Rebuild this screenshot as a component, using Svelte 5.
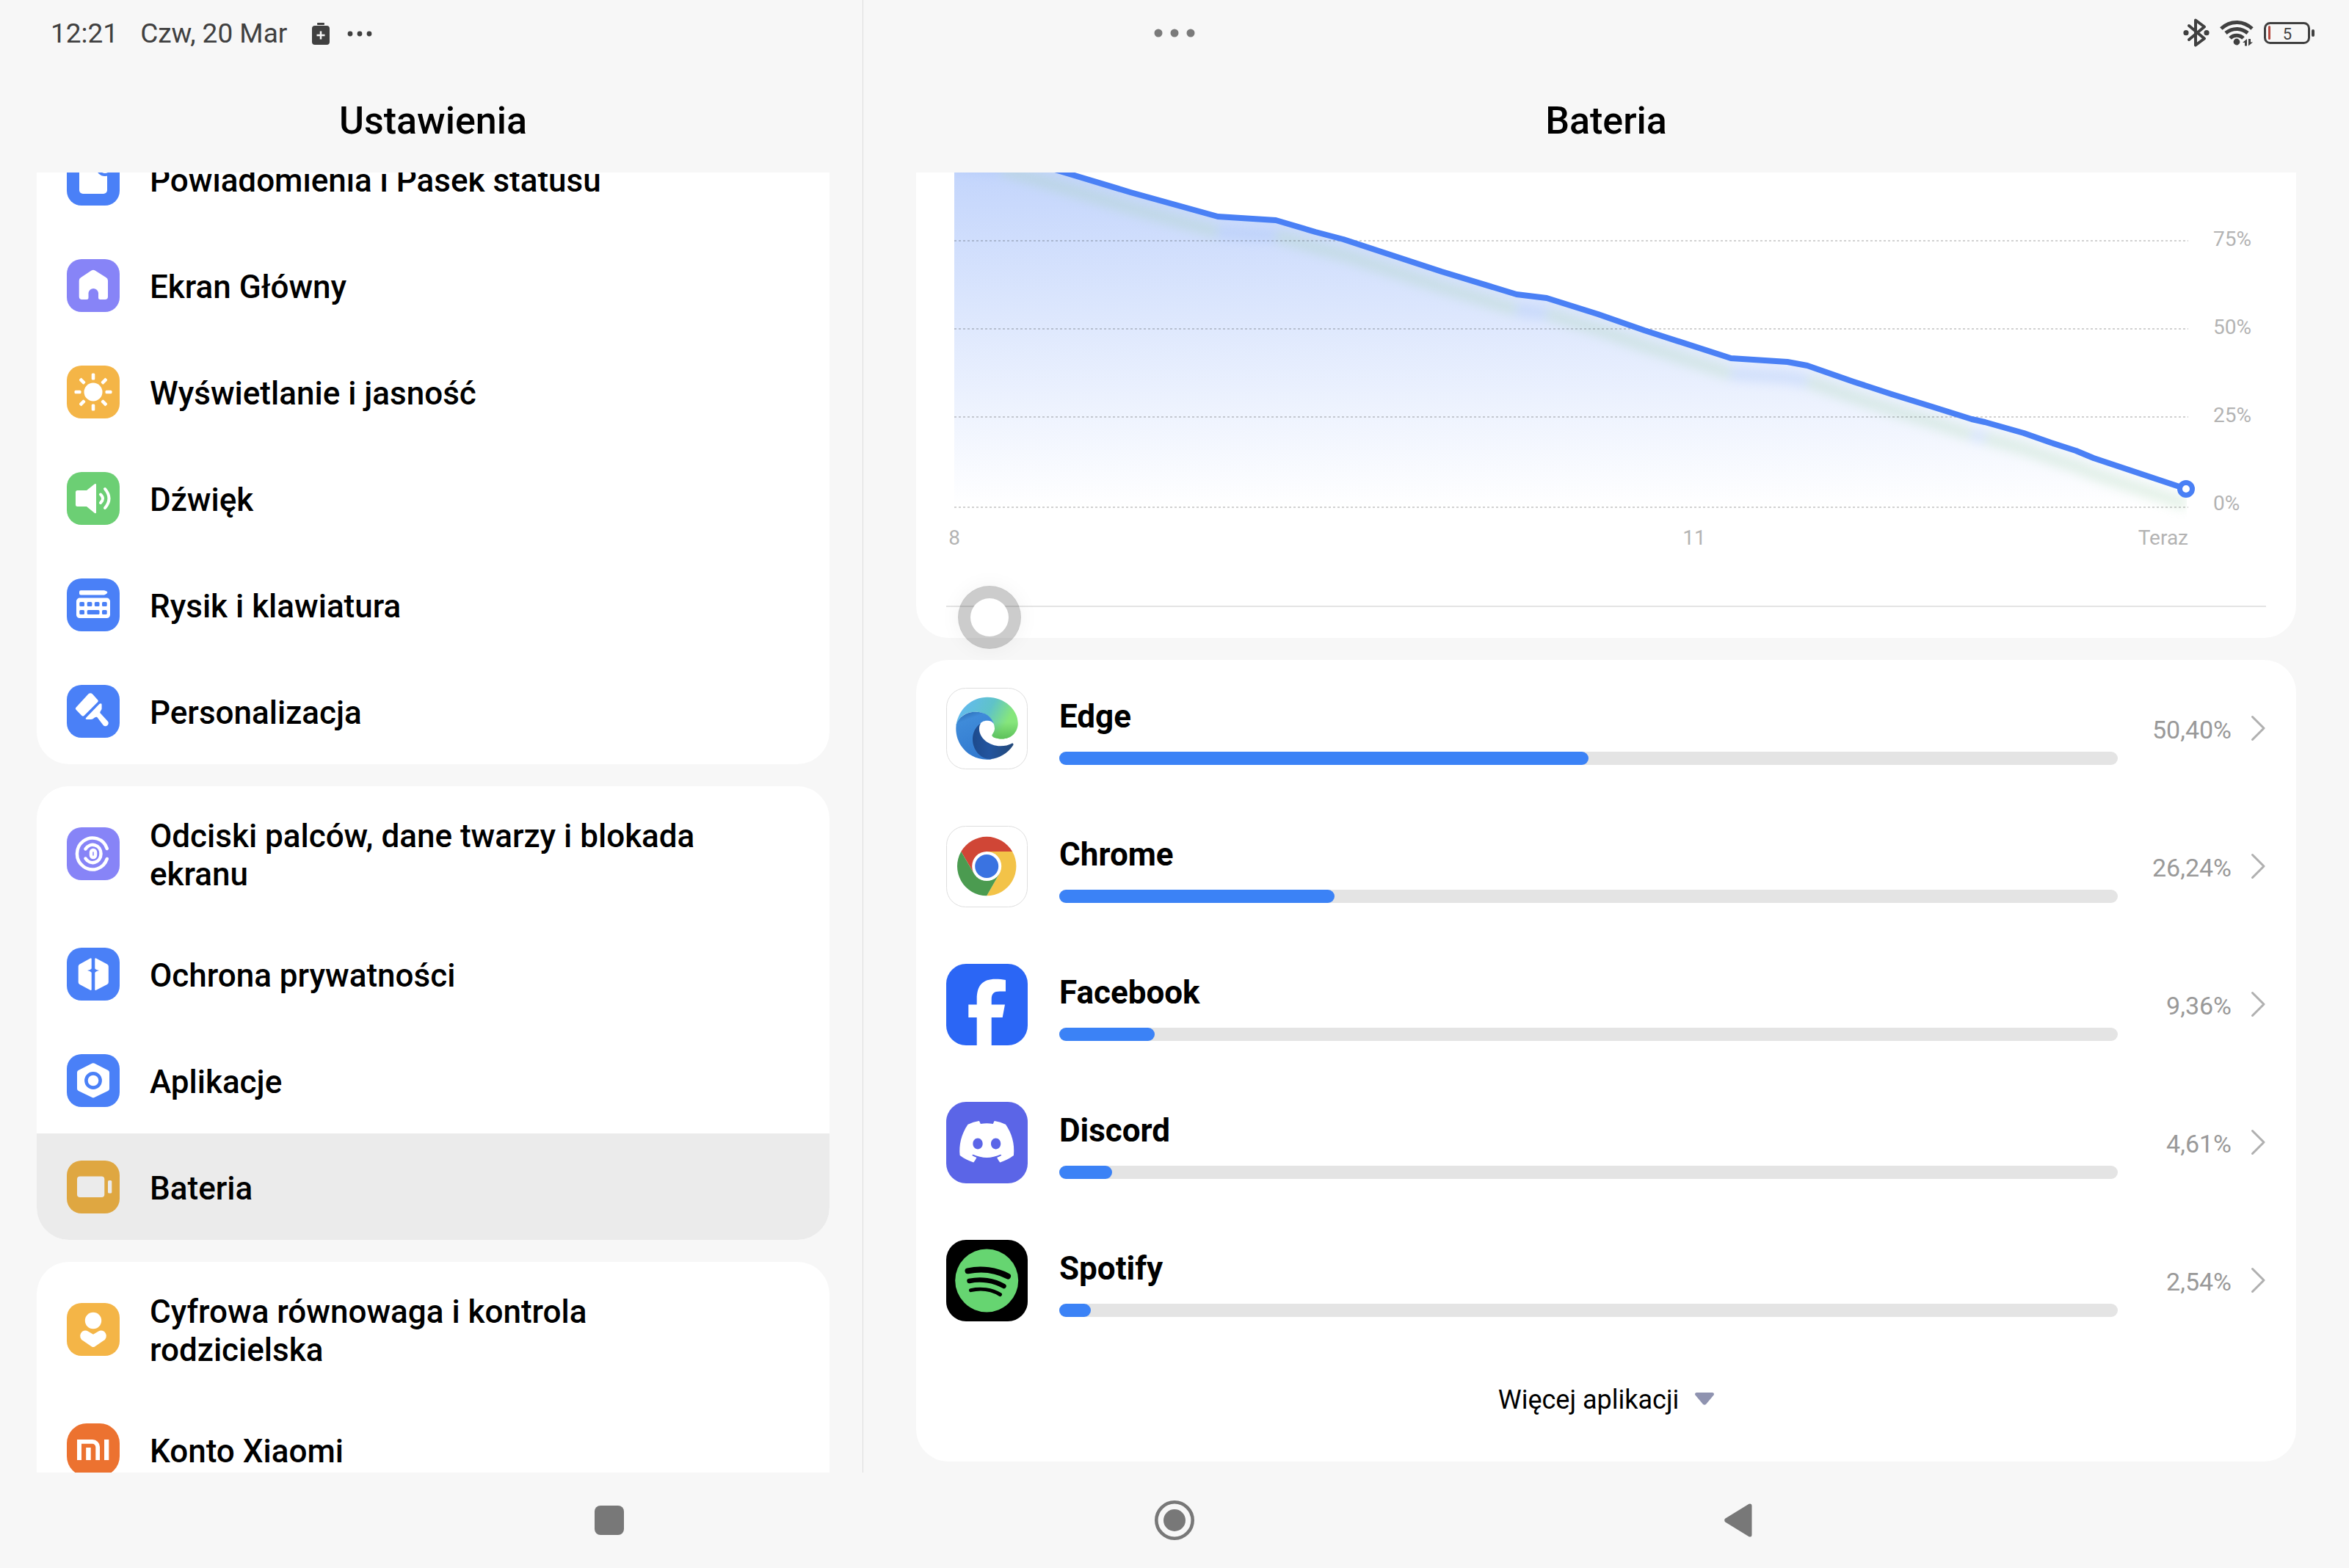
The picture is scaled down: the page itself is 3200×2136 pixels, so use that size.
<script>
    let groups = [
        [
            { icon: "notify", color: "#4a80f7", name: "Powiadomienia i Pasek statusu" },
            { icon: "home", color: "#8784f7", name: "Ekran Główny" },
            { icon: "sun", color: "#f4b547", name: "Wyświetlanie i jasność" },
            { icon: "sound", color: "#6ccf74", name: "Dźwięk" },
            { icon: "keyboard", color: "#4a80f7", name: "Rysik i klawiatura" },
            { icon: "brush", color: "#4a80f7", name: "Personalizacja" }
        ],
        [
            { icon: "finger", color: "#8784f7", name: "Odciski palców, dane twarzy i blokada ekranu" },
            { icon: "privacy", color: "#4a80f7", name: "Ochrona prywatności" },
            { icon: "apps", color: "#4a80f7", name: "Aplikacje" },
            { icon: "battery", color: "#dfa741", name: "Bateria" }
        ],
        [
            { icon: "person", color: "#f4b547", name: "Cyfrowa równowaga i kontrola rodzicielska" },
            { icon: "mi", color: "#ec7230", name: "Konto Xiaomi" }
        ]
    ];

    let selected = "Bateria";

    let usage = [
        { icon: "edge", name: "Edge", value: 50.4 },
        { icon: "chrome", name: "Chrome", value: 26.24 },
        { icon: "facebook", name: "Facebook", value: 9.36 },
        { icon: "discord", name: "Discord", value: 4.61 },
        { icon: "spotify", name: "Spotify", value: 2.54 }
    ];

    let percent = (value => value.toFixed(2).replace(".", ",") + "%");

    /* plot is 1681 wide, y = 0 is 100% */
    let points = [
        [0, -3], [64, 1], [157, 29], [240, 54], [359, 87], [438, 92], [492, 108], [530, 118],
        [664, 162], [766, 193], [807, 198], [877, 220], [940, 242], [1058, 280], [1135, 285],
        [1162, 290], [1225, 312], [1277, 329], [1332, 346], [1386, 363], [1404, 367],
        [1457, 382], [1494, 395], [1528, 406], [1552, 416], [1678, 458]
    ];
    let last = points[points.length - 1];

    let toPath = (list => "M" + list.map(p => p.join(" ")).join("L"));
    let between = ((from, to) => toPath(points.filter(p => p[0] >= from && p[0] <= to)));

    let line = toPath(points);
    let area = line + `V483H0Z`;

    /* idle stretches glow blue, active ones green */
    let idle = [[0, 64], [359, 438], [766, 807], [1058, 1162], [1386, 1404]];
    let active = [[64, 359], [438, 766], [807, 1058], [1162, 1386], [1404, 1678]];

    let grid = [
        { y: 120, label: "75%" },
        { y: 240, label: "50%" },
        { y: 360, label: "25%" },
        { y: 483, label: "0%" }
    ];
</script>

<div class="screen">
    <header class="status">
        <div class="status__left">
            <span class="clock">12:21</span>
            <span class="date">Czw, 20 Mar</span>
            <svg class="saver" width="24" height="30" viewBox="0 0 24 30">
                <rect x="7" y="0" width="10" height="3" rx="1" />
                <rect x="0" y="4" width="24" height="26" rx="4" />
                <path d="M12 11.5v11M6.5 17h11" stroke="#f7f7f7" stroke-width="2.5" />
            </svg>
            <svg width="34" height="8" viewBox="0 0 34 8">
                <circle cx="4" cy="4" r="3.4" /><circle cx="17" cy="4" r="3.4" /><circle cx="30" cy="4" r="3.4" />
            </svg>
        </div>
        <button class="handle" aria-label="Okno">
            <svg width="60" height="14" viewBox="0 0 60 14">
                <circle cx="8" cy="7" r="5.5" /><circle cx="30" cy="7" r="5.5" /><circle cx="52" cy="7" r="5.5" />
            </svg>
        </button>
        <div class="status__right">
            <svg width="36" height="40" viewBox="0 0 36 40">
                <path d="M8 10L29 27.5L17 36.5V2.5L29 11.5L8 29" fill="none" stroke="#404040" stroke-width="4" stroke-linecap="round" stroke-linejoin="round" />
                <circle cx="4" cy="19.7" r="3.6" /><circle cx="32" cy="19.7" r="3.6" />
            </svg>
            <svg width="46" height="36" viewBox="0 0 46 36">
                <g fill="none" stroke="#404040" stroke-width="5">
                    <path d="M1.8 12C14 .6 32 .6 44 12" />
                    <path d="M8 18C17 10.5 29 10.5 38 18" />
                    <path d="M14 25C19 20 27 20 32 25" />
                </g>
                <circle cx="23" cy="30" r="4.4" />
                <path d="M31 31L37 26v9.500h-3V31zM45 30.500L39 35.500V26h3v4.500z" />
            </svg>
            <svg width="69" height="30" viewBox="0 0 69 30">
                <rect x="1.5" y="1.5" width="60" height="27" rx="7" fill="none" stroke="#404040" stroke-width="3" />
                <rect x="65" y="10" width="4" height="10" rx="2" />
                <rect x="6" y="5" width="3" height="19" rx="1.5" fill="#b5483f" />
                <text class="level" x="32" y="24" text-anchor="middle">5</text>
            </svg>
        </div>
    </header>

    <section class="pane pane--menu">
        <h1 class="title">Ustawienia</h1>
        <div class="scroll">
            <nav class="stack">
                {#each groups as group}
                    <div class="card">
                        {#each group as item}
                            <button class="item" class:item--active={item.name === selected}>
                                <svg class="item__icon" viewBox="0 0 72 72" fill="#fff">
                                    <rect width="72" height="72" rx={item.icon === "mi" ? 27 : 20} fill={item.color} />
                                    {#if item.icon === "notify"}
                                        <rect x="17" y="17" width="38" height="39" rx="5" />
                                        <circle cx="52" cy="20" r="12" fill="#4a80f7" />
                                        <circle cx="52" cy="20" r="8" />
                                    {:else if item.icon === "home"}
                                        <path d="M33.5 15.5a5 5 0 0 1 5 0L53.5 25a5 5 0 0 1 2.5 4.3V51a4 4 0 0 1-4 4h-6.5a2.5 2.5 0 0 1-2.5-2.5V46a6.8 6.8 0 0 0-13.5 0v6.5a2.5 2.5 0 0 1-2.5 2.5h-6.3a4 4 0 0 1-4-4V29.3a5 5 0 0 1 2.5-4.3z" />
                                    {:else if item.icon === "sun"}
                                        <circle cx="36" cy="36" r="12.5" />
                                        {#each [0, 45, 90, 135, 180, 225, 270, 315] as angle}
                                            <rect x="33.7" y="10.5" width="4.6" height="9" rx="1.5" transform="rotate({angle} 36 36)" />
                                        {/each}
                                    {:else if item.icon === "sound"}
                                        <path d="M14.5 25H27L38 16.3q2-1 2 1V55q0 2-2 1L27 47H14.5a2.5 2.5 0 0 1-2.5-2.5v-17a2.5 2.5 0 0 1 2.5-2.5z" />
                                        <path d="M46 30.5q6 5.5 0 11.5M52 23q11 13 0 26" fill="none" stroke="#fff" stroke-width="4" stroke-linecap="round" />
                                    {:else if item.icon === "keyboard"}
                                        <path d="M19 16.2H51q3 .6 4.5 3-1.5 2.6-4.5 3.2H19a2 2 0 0 1-2-2v-2.2a2 2 0 0 1 2-2z" />
                                        <rect x="13" y="26.6" width="46" height="27.4" rx="4.5" />
                                        <g fill="#4a80f7">
                                            <rect x="17.3" y="32" width="6.7" height="6" rx="1.5" />
                                            <rect x="27.7" y="32" width="6.7" height="6" rx="1.5" />
                                            <rect x="37.8" y="32" width="6.7" height="6" rx="1.5" />
                                            <rect x="48" y="32" width="6.7" height="6" rx="1.5" />
                                            <rect x="17.3" y="43" width="6.7" height="6" rx="1.5" />
                                            <rect x="27.7" y="43" width="16.8" height="6" rx="1.5" />
                                            <rect x="48" y="43" width="6.7" height="6" rx="1.5" />
                                        </g>
                                    {:else if item.icon === "brush"}
                                        <path d="M29.5 12.3q2.8-2 5.5.2L42.2 20.5q1.3 1.5 0 2.8L23.5 42q-1.6 1.2-3 0L12.5 33.8q-1.4-1.5 0-3z" />
                                        <path d="M44.6 25.8q2.9-1.5 3 1V32c0 2.8-2.8 4-2.2 6.2L55.3 49a3.8 3.8 0 0 1-5.4 6.3L41.5 44.3c-3-2-4.5 2.5-8.5 2.7h-5.5q-3.2-.2-1-2.6z" />
                                    {:else if item.icon === "finger"}
                                        <g fill="none" stroke="#fff" stroke-width="4.5" stroke-linecap="round">
                                            <path d="M54.8 29A21 21.5 0 1 0 54.8 43" />
                                            <path d="M25.5 29.5C32 19.5 46.5 23.5 46.5 36S32 52.5 25.5 42.5" />
                                            <rect x="33" y="31" width="6" height="10" rx="3" />
                                        </g>
                                    {:else if item.icon === "privacy"}
                                        <path d="M32 14.4q1.7-.6 1.7 1.2V57q0 1.4-1.7.8L17.5 50q-1.8-1-1.8-3V25.5q0-2 1.8-3zM40 14.4q-1.7-.6-1.7 1.2V57q0 1.4 1.7.8L55 50q1.8-1 1.8-3V25.5q0-2-1.8-3z" />
                                        <path d="M36 24q1 6 8 7-7 1-8 8-1-7-8-8 7-1 8-7z" fill="#4a80f7" />
                                    {:else if item.icon === "apps"}
                                        <path d="M34.5 12.6q1.5-.8 3 0L56.2 22q1.8 1 1.8 3v22q0 2-1.8 3L37.5 59.1q-1.5.8-3 0L15.8 50Q14 49 14 47V25q0-2 1.8-3z" />
                                        <circle cx="36" cy="36" r="9.6" fill="none" stroke="#4a80f7" stroke-width="4.6" />
                                    {:else if item.icon === "battery"}
                                        <g fill="#ebebeb">
                                            <rect x="14" y="21.5" width="37.3" height="28.5" rx="4" />
                                            <rect x="56" y="27" width="5.3" height="17.5" rx="1.5" />
                                        </g>
                                    {:else if item.icon === "person"}
                                        <circle cx="36" cy="24" r="11.2" />
                                        <path d="M34 59.5L22 51.2A7.2 7.2 0 0 1 28.8 38.4L36 42.8L43.2 38.4A7.2 7.2 0 0 1 50 51.2L38 59.5q-2 1-4 0z" />
                                    {:else if item.icon === "mi"}
                                        <path d="M14 22H35a10 10 0 0 1 10 10V50H39.3V32.5a4.5 4.5 0 0 0-4.5-4.7H20V50H14z" />
                                        <rect x="26.2" y="33" width="6.5" height="17" />
                                        <rect x="51" y="22" width="6.3" height="28" />
                                    {/if}
                                </svg>
                                <span class="item__name">{item.name}</span>
                            </button>
                        {/each}
                    </div>
                {/each}
            </nav>
        </div>
    </section>

    <section class="pane pane--detail">
        <h1 class="title">Bateria</h1>
        <div class="scroll">
            <div class="stack">
                <div class="card card--chart">
                    <svg class="chart" viewBox="-52 -37 1880 600">
                        <defs>
                            <linearGradient id="fade" gradientUnits="userSpaceOnUse" x1="0" y1="0" x2="0" y2="483">
                                <stop offset="0" stop-color="#4a80f5" stop-opacity=".35" />
                                <stop offset="1" stop-color="#4a80f5" stop-opacity="0" />
                            </linearGradient>
                            <filter id="soft" filterUnits="userSpaceOnUse" x="-20" y="-60" width="1720" height="620">
                                <feGaussianBlur stdDeviation="7" />
                            </filter>
                            <clipPath id="plot"><rect x="0" y="-37" width="1679" height="560" /></clipPath>
                        </defs>
                        <path d={area} fill="url(#fade)" />
                        <g clip-path="url(#plot)">
                            <g class="glow" filter="url(#soft)" transform="translate(0 21)">
                                {#each idle as [from, to]}
                                    <path d={between(from, to)} stroke="#9cbcf5" />
                                {/each}
                                {#each active as [from, to]}
                                    <path d={between(from, to)} stroke="#a8d4b0" />
                                {/each}
                            </g>
                        </g>
                        {#each grid as row}
                            <path class="rule" d="M0 {row.y}H1681" />
                        {/each}
                        <path class="line" d={line} />
                        <circle cx={last[0]} cy={last[1]} r="8.5" fill="#fff" stroke="#4a80f5" stroke-width="7" />
                        {#each grid as row, i}
                            <text class="axis" x="1715" y={127 + i * 120}>{row.label}</text>
                        {/each}
                        <text class="axis" x="0" y="534" text-anchor="middle">8</text>
                        <text class="axis" x="1008" y="534" text-anchor="middle">11</text>
                        <text class="axis" x="1681" y="534" text-anchor="end">Teraz</text>
                    </svg>
                    <hr />
                    <button class="touch" aria-label="Menu dotykowe"></button>
                </div>

                <div class="card">
                    {#each usage as app}
                        <button class="app">
                            <svg class="app__icon" viewBox="0 0 111 111">
                                {#if app.icon === "edge"}
                                    <defs>
                                        <linearGradient id="edgeTop" x1="0" y1="0" x2="1" y2=".35">
                                            <stop offset=".2" stop-color="#62bbea" />
                                            <stop offset=".58" stop-color="#5fc3c8" />
                                            <stop offset=".92" stop-color="#86e67c" />
                                        </linearGradient>
                                        <linearGradient id="edgeLow" x1="0" y1="0" x2="0" y2="1">
                                            <stop offset=".6" stop-color="#5cc05a" stop-opacity="0" />
                                            <stop offset="1" stop-color="#5cc05a" />
                                        </linearGradient>
                                        <linearGradient id="edgeMid" x1=".2" y1="0" x2=".5" y2="1">
                                            <stop offset="0" stop-color="#2a6cb4" />
                                            <stop offset=".18" stop-color="#3f8bd9" />
                                            <stop offset="1" stop-color="#3179cf" />
                                        </linearGradient>
                                        <linearGradient id="edgeDark" x1="0" y1="0" x2="1" y2="0">
                                            <stop offset="0" stop-color="#1d4a8c" />
                                            <stop offset=".4" stop-color="#23559f" />
                                            <stop offset="1" stop-color="#234879" />
                                        </linearGradient>
                                    </defs>
                                    <rect class="edging" x=".5" y=".5" width="110" height="110" rx="26" />
                                    {#each ["edgeTop", "edgeLow"] as fill}
                                        <path d="M13.5 51C17 28 35 12.7 56 12.7C80 12.7 97.7 30 97.7 48C97.7 61 88 69.5 76 69.5C68 69.5 62 67 62.5 64.5C63 62.5 66 60 66 55.5C66 43 54 32.7 40 32.7C28 32.7 18 38 13.5 51Z" fill="url(#{fill})" />
                                    {/each}
                                    <path d="M13.6 50C17 40 27 32.7 40 32.7C53 32.7 62 39 65.3 50C63 46 60 44.8 55.5 44.8C51 44.8 47 47 46 50C41 56 39 62 39 70C39 84 46 95 62 97.2C60 97.7 58 97.7 55.5 97.7C32 97.7 13.3 79 13.3 55.5Z" fill="url(#edgeMid)" />
                                    <path d="M47 48.5C40 53 36 61 36 70C36 84 46 97 60 97.3C73 96 85 88 91.3 78C92 76 90.5 75 89 76C85 78 80 79.3 74 79.3C58 79.3 45 68 45 56C45 53 45.5 51 47 48.5Z" fill="url(#edgeDark)" />
                                {:else if app.icon === "chrome"}
                                    <rect class="edging" x=".5" y=".5" width="110" height="110" rx="26" />
                                    <path d="M20.3 35A40.3 40.3 0 0 1 90.1 35H55.2L37.9 65Z" fill="#d04636" />
                                    <path d="M90.1 35A40.3 40.3 0 0 1 55.2 95.3L72.5 65L55.2 35Z" fill="#f3c348" />
                                    <path d="M55.2 95.3A40.3 40.3 0 0 1 20.3 35L37.9 65H72.5Z" fill="#4b9b50" />
                                    <circle cx="55.2" cy="55" r="20" fill="#fff" />
                                    <circle cx="55.2" cy="55" r="16" fill="#3a73e1" />
                                {:else if app.icon === "facebook"}
                                    <rect width="111" height="111" rx="27" fill="#2b66f5" />
                                    <path d="M41.7 111V73H30.3V55.4H41.7V48C41.7 29 50 20.7 67 20.7C72 20.7 77 21 81 22V37.5H73C65 37.5 61.7 40.5 61.7 48V55.4H80L76.7 73H61.7V111Z" fill="#fff" />
                                {:else if app.icon === "discord"}
                                    <rect width="111" height="111" rx="27" fill="#5b65e7" />
                                    <path transform="translate(18.3 17.2) scale(3.083)" fill="#fff" d="M20.317 4.37a19.79 19.79 0 0 0-4.885-1.515.074.074 0 0 0-.079.037c-.211.375-.445.865-.608 1.25-1.845-.276-3.68-.276-5.487 0-.164-.393-.406-.874-.618-1.25a.077.077 0 0 0-.079-.037 19.74 19.74 0 0 0-4.885 1.515.07.07 0 0 0-.032.028C.533 9.046-.319 13.58.099 18.058a.082.082 0 0 0 .031.056c2.053 1.508 4.041 2.423 5.993 3.029a.078.078 0 0 0 .084-.028c.462-.63.873-1.295 1.226-1.994a.076.076 0 0 0-.042-.106c-.653-.248-1.274-.55-1.872-.892a.077.077 0 0 1-.008-.128c.126-.094.252-.192.372-.291a.074.074 0 0 1 .078-.011c3.928 1.793 8.18 1.793 12.061 0a.074.074 0 0 1 .079.01c.12.099.246.198.373.292a.077.077 0 0 1-.007.128 12.3 12.3 0 0 1-1.873.891.077.077 0 0 0-.041.107c.36.698.772 1.363 1.225 1.993a.076.076 0 0 0 .084.029c1.961-.607 3.95-1.522 6.002-3.029a.077.077 0 0 0 .031-.055c.5-5.177-.838-9.674-3.549-13.66a.061.061 0 0 0-.031-.029zM8.02 15.331c-1.183 0-2.157-1.086-2.157-2.419s.956-2.419 2.157-2.419c1.211 0 2.176 1.095 2.157 2.419 0 1.333-.956 2.419-2.157 2.419zm7.975 0c-1.183 0-2.157-1.086-2.157-2.419s.955-2.419 2.157-2.419c1.211 0 2.176 1.095 2.157 2.419 0 1.333-.946 2.419-2.157 2.419z" />
                                {:else}
                                    <rect width="111" height="111" rx="27" />
                                    <circle cx="55.2" cy="55.4" r="43" fill="#66d571" />
                                    <g fill="none" stroke="#000" stroke-linecap="round">
                                        <path d="M29.5 42.3C48 38.5 68 41 84 49.5" stroke-width="8" />
                                        <path d="M31.5 56C47 52.5 65 55 78.5 63" stroke-width="6.5" />
                                        <path d="M33.5 68.6C47 65.5 62 67.5 73.5 74.5" stroke-width="5" />
                                    </g>
                                {/if}
                            </svg>
                            <span class="app__body">
                                <span class="app__name">{app.name}</span>
                                <span class="bar"><span class="bar__fill" style="width: {Math.round(app.value)}%"></span></span>
                            </span>
                            <span class="app__value">{percent(app.value)}</span>
                            <svg class="app__arrow" width="20" height="36" viewBox="0 0 20 36">
                                <path d="M1.5 2.5L17 18L1.5 33.5" />
                            </svg>
                        </button>
                    {/each}
                    <button class="more">
                        Więcej aplikacji
                        <svg width="26" height="20" viewBox="0 0 26 20">
                            <path d="M2 0H24q3 1 1.5 3.500L15 16q-2 1.6-4 0L.5 3.5Q-1 1 2 0z" />
                        </svg>
                    </button>
                </div>
            </div>
        </div>
    </section>

    <footer class="keys">
        <button class="key" aria-label="Ostatnie">
            <svg width="40" height="40" viewBox="0 0 40 40"><rect width="40" height="40" rx="8" /></svg>
        </button>
        <button class="key" aria-label="Ekran główny">
            <svg width="54" height="54" viewBox="0 0 54 54">
                <circle cx="27" cy="27" r="24.7" fill="none" stroke="#787878" stroke-width="4.6" />
                <circle cx="27" cy="27" r="15" />
            </svg>
        </button>
        <button class="key" aria-label="Wstecz">
            <svg width="42" height="46" viewBox="0 0 42 46">
                <path d="M1 20.8L33.5.8Q37.5-.5 37.5 3V43q0 3.5-4 2.2L1 25.2q-1.6-2.2 0-4.4z" />
            </svg>
        </button>
    </footer>
</div>

<style>
    :global(body) {
        background: #f7f7f7;
    }

    .screen {
        display: grid;
        grid-template-columns: minmax(0, 1176fr) minmax(0, 2024fr);
        grid-template-rows: 90px minmax(0, 1fr) 130px;
        height: 100vh;
        overflow: hidden;
        background: #f7f7f7;
        color: #000;
        font-family: Roboto, "Noto Sans", sans-serif;
    }

    button {
        margin: 0;
        padding: 0;
        border: 0;
        background: none;
        color: inherit;
        font: inherit;
        text-align: left;
        cursor: pointer;
    }

    svg {
        display: block;
        flex: none;
    }

    /* status bar */
    .status {
        grid-area: 1 / 1 / 2 / 3;
        display: grid;
        grid-template-columns: 1fr auto 1fr;
        align-items: center;
        padding: 0 47px 0 69px;
        color: #404040;
        fill: #404040;
        font-size: 37px;
        line-height: 42px;
    }

    .status__left,
    .status__right {
        display: flex;
        align-items: center;
    }

    .status__left {
        padding-top: 2px;
    }

    .status__right {
        justify-content: flex-end;
        gap: 14px;
    }

    .date {
        margin: 0 34px 0 30px;
    }

    .saver {
        margin-right: 24px;
    }

    .handle {
        fill: #7a7a7a;
        margin-right: 22px;
    }

    .level {
        font-size: 22px;
    }

    /* panes */
    .pane {
        display: flex;
        flex-direction: column;
        min-height: 0;
        padding-top: 90px;
    }

    .pane--menu {
        grid-area: 1 / 1 / 3 / 2;
        padding-left: 50px;
        padding-right: 45px;
        border-right: 1px solid #dcdcdc;
    }

    .pane--detail {
        grid-area: 1 / 2 / 3 / 3;
        padding-left: 72px;
        padding-right: 72px;
    }

    .title {
        flex: none;
        margin: 0;
        padding-top: 4px;
        font-size: 52px;
        line-height: 141px;
        font-weight: 500;
        text-align: center;
    }

    .scroll {
        flex: 1;
        min-height: 0;
        overflow: hidden;
    }

    /* content is scrolled a little way down */
    .stack {
        display: flex;
        flex-direction: column;
        gap: 30px;
        margin-top: -64px;
    }

    .card {
        flex: none;
        border-radius: 44px;
        background: #fff;
    }

    /* menu */
    .item {
        display: flex;
        align-items: center;
        gap: 41px;
        box-sizing: border-box;
        width: 100%;
        min-height: 145px;
        padding: 34px 90px 34px 41px;
    }

    .item:last-child {
        border-radius: 0 0 44px 44px;
    }

    .item--active {
        background: #ebebeb;
    }

    .item__icon {
        width: 72px;
        height: 72px;
    }

    .item__name {
        padding: 8px 0 3px;
        font-size: 44px;
        line-height: 52px;
        font-weight: 500;
    }

    /* chart */
    .card--chart {
        position: relative;
        padding-bottom: 42px;
    }

    .chart {
        width: 100%;
        height: auto;
    }

    .glow {
        fill: none;
        stroke-width: 18px;
        opacity: 0.28;
    }

    .rule {
        stroke: #000;
        stroke-opacity: 0.18;
        stroke-width: 2px;
        stroke-dasharray: 3 3;
    }

    .line {
        fill: none;
        stroke: #4a80f5;
        stroke-width: 8px;
        stroke-linejoin: round;
    }

    .axis {
        fill: #b3b3b3;
        font-size: 28px;
    }

    hr {
        height: 2px;
        margin: 54px 41px 0;
        border: 0;
        background: #e4e4e4;
    }

    .touch {
        position: absolute;
        left: 57px;
        bottom: -15px;
        box-sizing: border-box;
        width: 86px;
        height: 86px;
        border: 17px solid rgba(0, 0, 0, 0.2);
        border-radius: 50%;
        background: #fff;
        background-clip: padding-box;
        box-shadow: 0 0 28px rgba(0, 0, 0, 0.05);
    }

    /* usage list */
    .app {
        display: flex;
        align-items: center;
        box-sizing: border-box;
        width: 100%;
        height: 188px;
        padding: 0 41px 2px;
    }

    .app__icon {
        width: 111px;
        height: 111px;
    }

    .edging {
        fill: #fff;
        stroke: #dedede;
    }

    .app__body {
        display: flex;
        flex: 1;
        flex-direction: column;
        gap: 22px;
        margin-left: 43px;
        padding-top: 8px;
    }

    .app__name {
        font-size: 44px;
        line-height: 52px;
        font-weight: 700;
    }

    .bar {
        height: 18px;
        border-radius: 9px;
        background: #e4e4e4;
    }

    .bar__fill {
        display: block;
        height: 100%;
        border-radius: 9px;
        background: #3b82f6;
    }

    .app__value {
        width: 155px;
        padding-top: 4px;
        color: #999;
        font-size: 34px;
        line-height: 40px;
        text-align: right;
    }

    .app__arrow {
        margin-left: 27px;
        fill: none;
        stroke: #b0b0b0;
        stroke-width: 3px;
        stroke-linecap: round;
        stroke-linejoin: round;
    }

    .more {
        display: flex;
        align-items: center;
        justify-content: center;
        gap: 22px;
        width: 100%;
        padding: 47px 0 63px;
        font-size: 36px;
        line-height: 42px;
        fill: #8f93b0;
    }

    /* navigation keys */
    .keys {
        grid-area: 3 / 1 / 4 / 3;
        display: flex;
        align-items: center;
        justify-content: center;
        gap: 650px;
        fill: #787878;
    }

    .key {
        display: flex;
        align-items: center;
        justify-content: center;
        width: 120px;
        height: 100px;
    }
</style>
